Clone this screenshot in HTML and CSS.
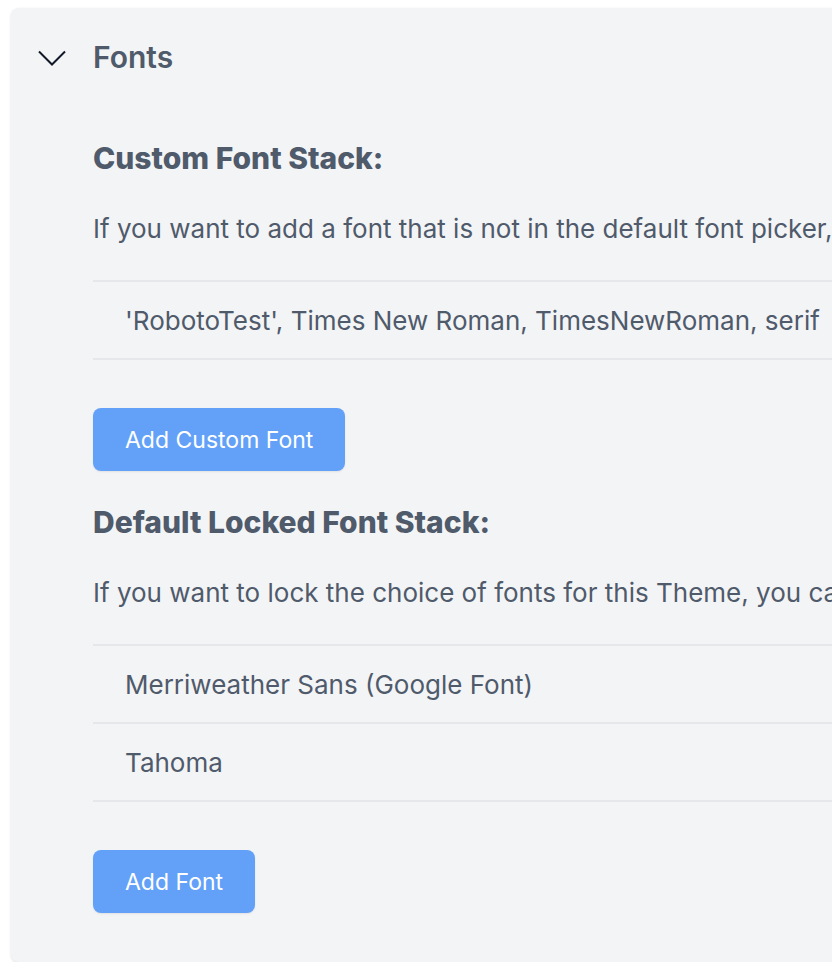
FILE: index.html
```html
<!DOCTYPE html>
<html>
<head>
<meta charset="utf-8">
<link rel="stylesheet" href="styles.css">
</head>
<body>
<div class="panel">
  <div class="panel-header">
    <svg class="chevron" width="30" height="18" viewBox="0 0 30 18"><path d="M2 2.5 L15 15.5 L28 2.5" fill="none" stroke="#111827" stroke-width="2"/></svg>
    <span class="panel-title">Fonts</span>
  </div>
  <div class="panel-body">
    <h3 class="section-title">Custom Font Stack:</h3>
    <p class="section-desc">If you want to add a font that is not in the default font picker, you can add it here.</p>
    <div class="list">
      <div class="list-row">'RobotoTest', Times New Roman, TimesNewRoman, serif</div>
    </div>
    <button class="btn">Add Custom Font</button>
    <h3 class="section-title">Default Locked Font Stack:</h3>
    <p class="section-desc">If you want to lock the choice of fonts for this Theme, you can add them here.</p>
    <div class="list">
      <div class="list-row">Merriweather Sans (Google Font)</div>
      <div class="list-row">Tahoma</div>
    </div>
    <button class="btn">Add Font</button>
  </div>
</div>
</body>
</html>
```
FILE: styles.css
```css
html, body {
  margin: 0;
  padding: 0;
  background: #ffffff;
  overflow: hidden;
}
body {
  padding: 8px 0 0 11px;
  font-family: Inter, "Open Sans", sans-serif;
  color: #4f5a6b;
}
.panel {
  width: 1100px;
  height: 954px;
  background: #f3f4f6;
  border-radius: 8px;
  box-shadow: 0 1px 3px rgba(0,0,0,0.12);
  box-sizing: border-box;
}
.panel-header {
  display: flex;
  align-items: center;
  height: 98px;
  padding-left: 26px;
}
.chevron {
  display: block;
  margin-top: 2px;
}
.panel-title {
  margin-left: 26px;
  font-size: 30px;
  font-weight: 600;
  color: #4f5a6b;
}
.panel-body {
  padding-left: 82px;
}
.section-title {
  margin: 0;
  font-size: 30px;
  font-weight: 800;
  line-height: 36px;
  padding-top: 34px;
  color: #4f5a6b;
}
.section-desc {
  margin: 37px 0 0 0;
  font-size: 26px;
  line-height: 32px;
  white-space: nowrap;
  color: #4f5a6b;
}
.list {
  margin-top: 35px;
  border-bottom: 2px solid #e5e7eb;
}
.list-row {
  border-top: 2px solid #e5e7eb;
  height: 76px;
  display: flex;
  align-items: center;
  padding-left: 32px;
  font-size: 26px;
  white-space: nowrap;
}
.btn {
  display: block;
  margin-top: 48px;
  height: 63px;
  padding: 0 32px;
  border: none;
  border-radius: 8px;
  background: #63a1f8;
  color: #ffffff;
  font-family: inherit;
  font-size: 23px;
  box-shadow: 0 1px 2px rgba(0,0,0,0.08);
}
.btn + .section-title {
  padding-top: 33px;
}
```
